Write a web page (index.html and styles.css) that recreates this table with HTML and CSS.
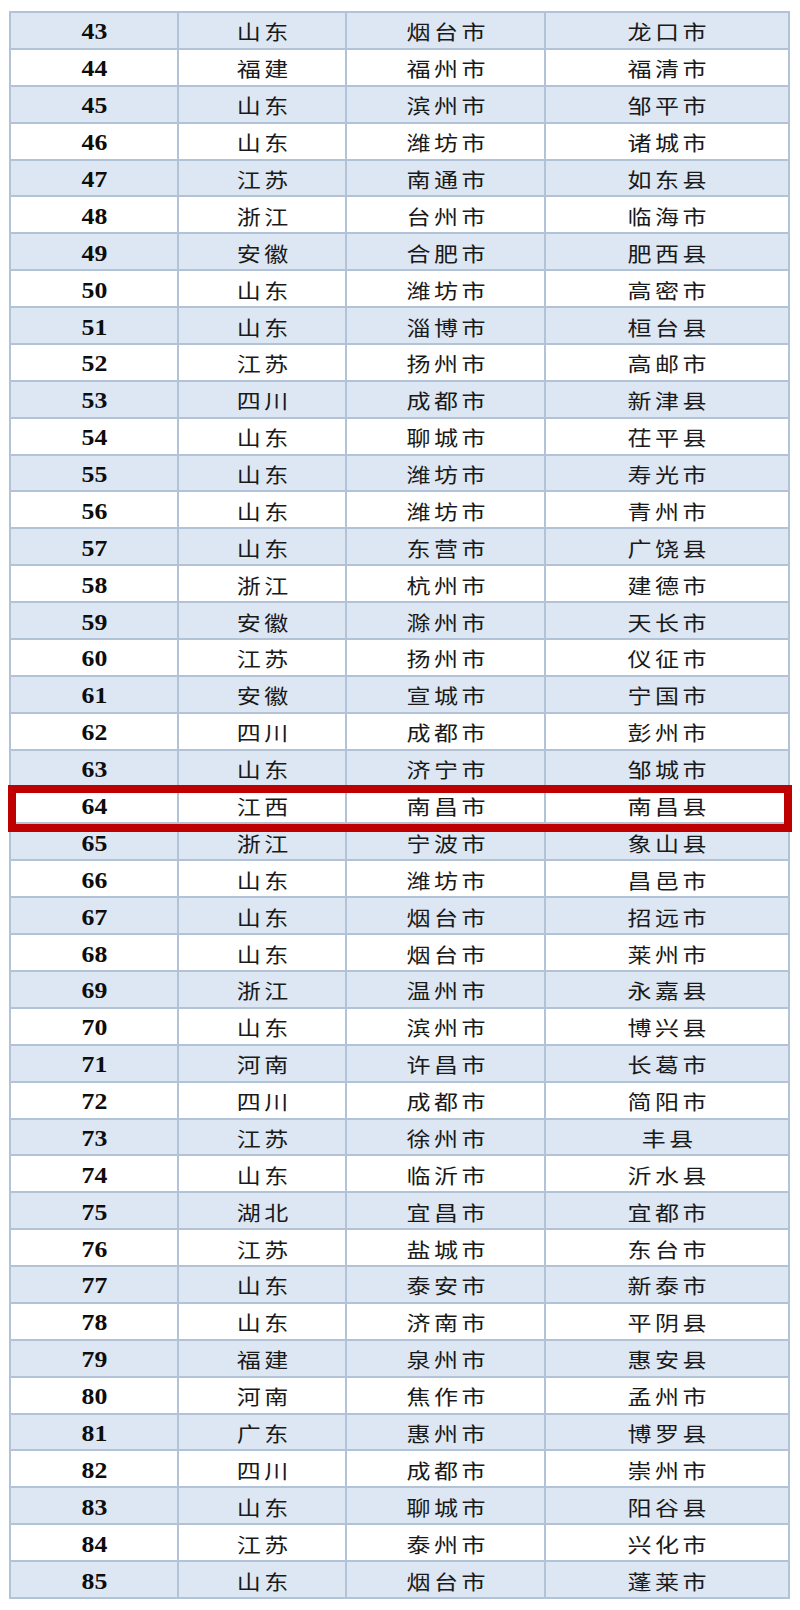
FILE: index.html
```html
<!DOCTYPE html>
<html lang="zh">
<head>
<meta charset="utf-8">
<title>表</title>
<link rel="stylesheet" href="styles.css">
</head>
<body>
<div class="page">
<div class="table">
<div class="row"><div class="c n"><span>43</span></div><div class="c"><span>山东</span></div><div class="c"><span>烟台市</span></div><div class="c"><span>龙口市</span></div></div>
<div class="row"><div class="c n"><span>44</span></div><div class="c"><span>福建</span></div><div class="c"><span>福州市</span></div><div class="c"><span>福清市</span></div></div>
<div class="row"><div class="c n"><span>45</span></div><div class="c"><span>山东</span></div><div class="c"><span>滨州市</span></div><div class="c"><span>邹平市</span></div></div>
<div class="row"><div class="c n"><span>46</span></div><div class="c"><span>山东</span></div><div class="c"><span>潍坊市</span></div><div class="c"><span>诸城市</span></div></div>
<div class="row"><div class="c n"><span>47</span></div><div class="c"><span>江苏</span></div><div class="c"><span>南通市</span></div><div class="c"><span>如东县</span></div></div>
<div class="row"><div class="c n"><span>48</span></div><div class="c"><span>浙江</span></div><div class="c"><span>台州市</span></div><div class="c"><span>临海市</span></div></div>
<div class="row"><div class="c n"><span>49</span></div><div class="c"><span>安徽</span></div><div class="c"><span>合肥市</span></div><div class="c"><span>肥西县</span></div></div>
<div class="row"><div class="c n"><span>50</span></div><div class="c"><span>山东</span></div><div class="c"><span>潍坊市</span></div><div class="c"><span>高密市</span></div></div>
<div class="row"><div class="c n"><span>51</span></div><div class="c"><span>山东</span></div><div class="c"><span>淄博市</span></div><div class="c"><span>桓台县</span></div></div>
<div class="row"><div class="c n"><span>52</span></div><div class="c"><span>江苏</span></div><div class="c"><span>扬州市</span></div><div class="c"><span>高邮市</span></div></div>
<div class="row"><div class="c n"><span>53</span></div><div class="c"><span>四川</span></div><div class="c"><span>成都市</span></div><div class="c"><span>新津县</span></div></div>
<div class="row"><div class="c n"><span>54</span></div><div class="c"><span>山东</span></div><div class="c"><span>聊城市</span></div><div class="c"><span>茌平县</span></div></div>
<div class="row"><div class="c n"><span>55</span></div><div class="c"><span>山东</span></div><div class="c"><span>潍坊市</span></div><div class="c"><span>寿光市</span></div></div>
<div class="row"><div class="c n"><span>56</span></div><div class="c"><span>山东</span></div><div class="c"><span>潍坊市</span></div><div class="c"><span>青州市</span></div></div>
<div class="row"><div class="c n"><span>57</span></div><div class="c"><span>山东</span></div><div class="c"><span>东营市</span></div><div class="c"><span>广饶县</span></div></div>
<div class="row"><div class="c n"><span>58</span></div><div class="c"><span>浙江</span></div><div class="c"><span>杭州市</span></div><div class="c"><span>建德市</span></div></div>
<div class="row"><div class="c n"><span>59</span></div><div class="c"><span>安徽</span></div><div class="c"><span>滁州市</span></div><div class="c"><span>天长市</span></div></div>
<div class="row"><div class="c n"><span>60</span></div><div class="c"><span>江苏</span></div><div class="c"><span>扬州市</span></div><div class="c"><span>仪征市</span></div></div>
<div class="row"><div class="c n"><span>61</span></div><div class="c"><span>安徽</span></div><div class="c"><span>宣城市</span></div><div class="c"><span>宁国市</span></div></div>
<div class="row"><div class="c n"><span>62</span></div><div class="c"><span>四川</span></div><div class="c"><span>成都市</span></div><div class="c"><span>彭州市</span></div></div>
<div class="row"><div class="c n"><span>63</span></div><div class="c"><span>山东</span></div><div class="c"><span>济宁市</span></div><div class="c"><span>邹城市</span></div></div>
<div class="row"><div class="c n"><span>64</span></div><div class="c"><span>江西</span></div><div class="c"><span>南昌市</span></div><div class="c"><span>南昌县</span></div></div>
<div class="row"><div class="c n"><span>65</span></div><div class="c"><span>浙江</span></div><div class="c"><span>宁波市</span></div><div class="c"><span>象山县</span></div></div>
<div class="row"><div class="c n"><span>66</span></div><div class="c"><span>山东</span></div><div class="c"><span>潍坊市</span></div><div class="c"><span>昌邑市</span></div></div>
<div class="row"><div class="c n"><span>67</span></div><div class="c"><span>山东</span></div><div class="c"><span>烟台市</span></div><div class="c"><span>招远市</span></div></div>
<div class="row"><div class="c n"><span>68</span></div><div class="c"><span>山东</span></div><div class="c"><span>烟台市</span></div><div class="c"><span>莱州市</span></div></div>
<div class="row"><div class="c n"><span>69</span></div><div class="c"><span>浙江</span></div><div class="c"><span>温州市</span></div><div class="c"><span>永嘉县</span></div></div>
<div class="row"><div class="c n"><span>70</span></div><div class="c"><span>山东</span></div><div class="c"><span>滨州市</span></div><div class="c"><span>博兴县</span></div></div>
<div class="row"><div class="c n"><span>71</span></div><div class="c"><span>河南</span></div><div class="c"><span>许昌市</span></div><div class="c"><span>长葛市</span></div></div>
<div class="row"><div class="c n"><span>72</span></div><div class="c"><span>四川</span></div><div class="c"><span>成都市</span></div><div class="c"><span>简阳市</span></div></div>
<div class="row"><div class="c n"><span>73</span></div><div class="c"><span>江苏</span></div><div class="c"><span>徐州市</span></div><div class="c"><span>丰县</span></div></div>
<div class="row"><div class="c n"><span>74</span></div><div class="c"><span>山东</span></div><div class="c"><span>临沂市</span></div><div class="c"><span>沂水县</span></div></div>
<div class="row"><div class="c n"><span>75</span></div><div class="c"><span>湖北</span></div><div class="c"><span>宜昌市</span></div><div class="c"><span>宜都市</span></div></div>
<div class="row"><div class="c n"><span>76</span></div><div class="c"><span>江苏</span></div><div class="c"><span>盐城市</span></div><div class="c"><span>东台市</span></div></div>
<div class="row"><div class="c n"><span>77</span></div><div class="c"><span>山东</span></div><div class="c"><span>泰安市</span></div><div class="c"><span>新泰市</span></div></div>
<div class="row"><div class="c n"><span>78</span></div><div class="c"><span>山东</span></div><div class="c"><span>济南市</span></div><div class="c"><span>平阴县</span></div></div>
<div class="row"><div class="c n"><span>79</span></div><div class="c"><span>福建</span></div><div class="c"><span>泉州市</span></div><div class="c"><span>惠安县</span></div></div>
<div class="row"><div class="c n"><span>80</span></div><div class="c"><span>河南</span></div><div class="c"><span>焦作市</span></div><div class="c"><span>孟州市</span></div></div>
<div class="row"><div class="c n"><span>81</span></div><div class="c"><span>广东</span></div><div class="c"><span>惠州市</span></div><div class="c"><span>博罗县</span></div></div>
<div class="row"><div class="c n"><span>82</span></div><div class="c"><span>四川</span></div><div class="c"><span>成都市</span></div><div class="c"><span>崇州市</span></div></div>
<div class="row"><div class="c n"><span>83</span></div><div class="c"><span>山东</span></div><div class="c"><span>聊城市</span></div><div class="c"><span>阳谷县</span></div></div>
<div class="row"><div class="c n"><span>84</span></div><div class="c"><span>江苏</span></div><div class="c"><span>泰州市</span></div><div class="c"><span>兴化市</span></div></div>
<div class="row"><div class="c n"><span>85</span></div><div class="c"><span>山东</span></div><div class="c"><span>烟台市</span></div><div class="c"><span>蓬莱市</span></div></div>
</div>
<div class="highlight"></div>
</div>
</body>
</html>
```

FILE: styles.css
```css
html, body {
  margin: 0;
  padding: 0;
  background: #ffffff;
}

.page {
  position: relative;
  width: 800px;
  height: 1610px;
  padding: 11px 0 0 9px;
  box-sizing: border-box;
}

.table {
  width: 781px;
  height: 1588px;
  box-sizing: border-box;
  padding: 2px;
  background: #b2c3d8;
  display: grid;
  grid-template-columns: 166px 166px 197px 242px;
  grid-template-rows: repeat(43, 1fr);
  gap: 2px;
}

.row {
  display: contents;
}

.c {
  background: #ffffff;
  display: flex;
  align-items: center;
  justify-content: center;
  overflow: hidden;
  color: #1a1a1a;
  font-family: "Noto Sans CJK SC", "Noto Sans", sans-serif;
  font-size: 20px;
  line-height: 1;
}

.row:nth-child(odd) .c {
  background: #dde7f3;
}

.c span {
  display: inline-block;
  letter-spacing: 3px;
  padding-left: 3px;
  padding-top: 4px;
  transform: scaleX(1.2);
}

.c.n span {
  font-family: "Liberation Serif", "Times New Roman", serif;
  font-weight: bold;
  font-size: 23px;
  letter-spacing: 0;
  padding-left: 0;
  padding-top: 3px;
  color: #0d0d0d;
  transform: scaleX(1.12);
}

.highlight {
  position: absolute;
  left: 8px;
  top: 785px;
  width: 784px;
  height: 47px;
  box-sizing: border-box;
  border: 8px solid #bf0000;
}
```
